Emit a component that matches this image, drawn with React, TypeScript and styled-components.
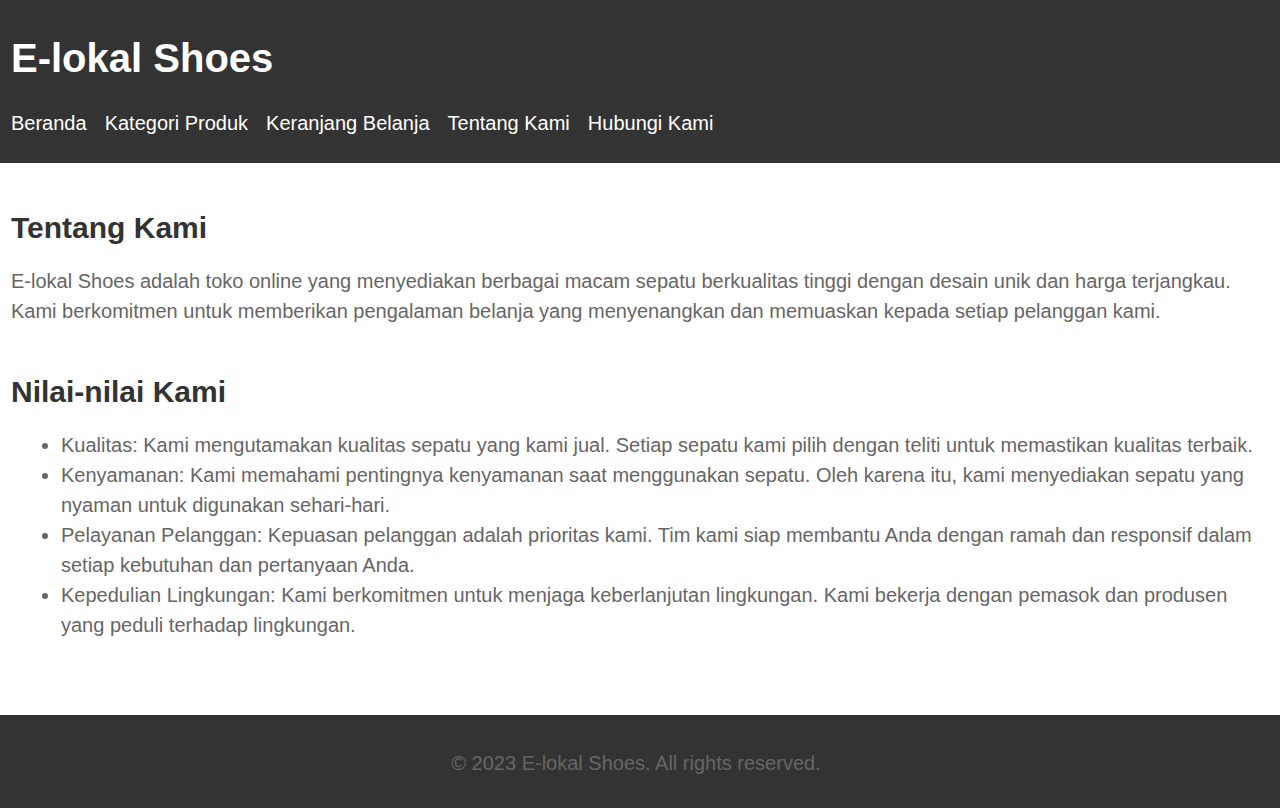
import React from "react";
import styled, { createGlobalStyle } from "styled-components";

const Global = createGlobalStyle`
  html, body { margin: 0; padding: 0; background: #fff; }
  body { font-family: "Liberation Sans", Arial, sans-serif; }
`;

const Header = styled.header`
  background: #333;
  color: #fff;
  padding: 35px 11px 28px;
`;

const Title = styled.h1`
  margin: 0;
  font-size: 40px;
  line-height: 46px;
  font-weight: 700;
`;

const Nav = styled.nav`
  display: flex;
  gap: 18px;
  margin-top: 31px;
`;

const NavLink = styled.a`
  color: #fff;
  text-decoration: none;
  font-size: 20px;
  line-height: 23px;
`;

const Main = styled.main`
  padding: 48px 11px 75px;
`;

const Heading = styled.h2<{ $gap?: number }>`
  margin: ${(p) => p.$gap ?? 0}px 0 21px;
  font-size: 30px;
  line-height: 34px;
  font-weight: 700;
  color: #333;
`;

const Para = styled.p`
  margin: 0;
  font-size: 20px;
  line-height: 30px;
  color: #666;
`;

const List = styled.ul`
  margin: 0;
  padding-left: 50px;
  font-size: 20px;
  line-height: 30px;
  color: #666;
`;

const Footer = styled.footer`
  background: #333;
  color: #666;
  text-align: center;
  font-size: 20px;
  line-height: 30px;
  padding: 33px 19px 30px 11px;
`;

export default function App() {
  return (
    <>
      <Global />
      <Header>
        <Title>E-lokal Shoes</Title>
        <Nav>
          <NavLink href="#">Beranda</NavLink>
          <NavLink href="#">Kategori Produk</NavLink>
          <NavLink href="#">Keranjang Belanja</NavLink>
          <NavLink href="#">Tentang Kami</NavLink>
          <NavLink href="#">Hubungi Kami</NavLink>
        </Nav>
      </Header>
      <Main>
        <Heading>Tentang Kami</Heading>
        <Para>
          E-lokal Shoes adalah toko online yang menyediakan berbagai macam sepatu berkualitas tinggi dengan desain unik dan harga terjangkau. Kami berkomitmen untuk memberikan pengalaman belanja yang menyenangkan dan memuaskan kepada setiap pelanggan kami.
        </Para>
        <Heading $gap={49}>Nilai-nilai Kami</Heading>
        <List>
          <li>Kualitas: Kami mengutamakan kualitas sepatu yang kami jual. Setiap sepatu kami pilih dengan teliti untuk memastikan kualitas terbaik.</li>
          <li>Kenyamanan: Kami memahami pentingnya kenyamanan saat menggunakan sepatu. Oleh karena itu, kami menyediakan sepatu yang nyaman untuk digunakan sehari-hari.</li>
          <li>Pelayanan Pelanggan: Kepuasan pelanggan adalah prioritas kami. Tim kami siap membantu Anda dengan ramah dan responsif dalam setiap kebutuhan dan pertanyaan Anda.</li>
          <li>Kepedulian Lingkungan: Kami berkomitmen untuk menjaga keberlanjutan lingkungan. Kami bekerja dengan pemasok dan produsen yang peduli terhadap lingkungan.</li>
        </List>
      </Main>
      <Footer>&copy; 2023 E-lokal Shoes. All rights reserved.</Footer>
    </>
  );
}
